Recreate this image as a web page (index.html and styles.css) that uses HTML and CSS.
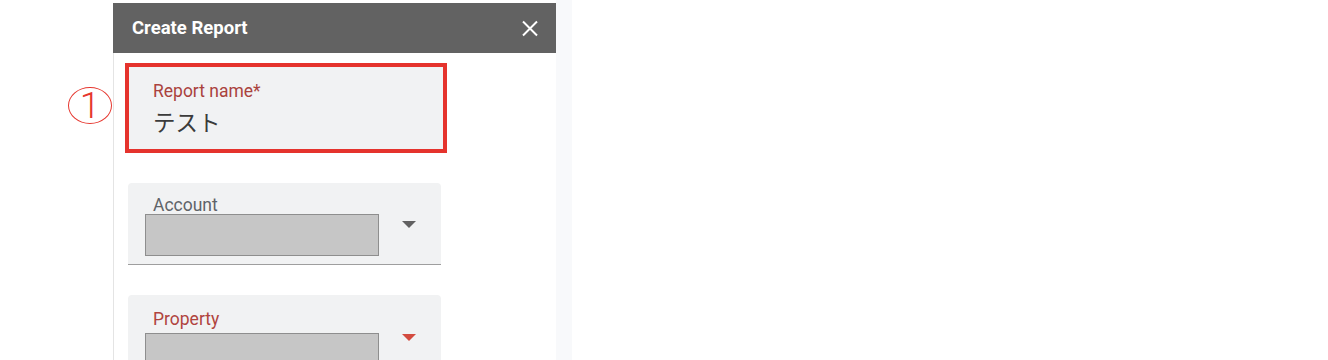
FILE: index.html
```html
<!DOCTYPE html>
<html lang="en">
<head>
    <meta charset="UTF-8">
    <meta name="viewport" content="width=device-width, initial-scale=1.0">
    <title>Create Report</title>
    <link rel="stylesheet" href="styles.css">
</head>
<body>
    <div class="page">
        <div class="gutter">
            <div class="step-mark">1</div>
        </div>
        <div class="panel">
            <div class="panel-header">
                <span class="panel-title">Create Report</span>
                <svg class="close-icon" width="16" height="17" viewBox="0 0 16 17">
                    <path d="M1 1.5 L15 15.5 M15 1.5 L1 15.5" stroke="#ffffff" stroke-width="2" fill="none"/>
                </svg>
            </div>
            <div class="panel-body">
                <div class="name-field">
                    <div class="name-label">Report name*</div>
                    <div class="name-value">テスト</div>
                </div>
                <div class="select-field">
                    <div class="select-main">
                        <div class="select-label">Account</div>
                        <div class="select-box"></div>
                    </div>
                    <div class="select-arrow"></div>
                </div>
                <div class="select-field select-field--active">
                    <div class="select-main">
                        <div class="select-label">Property</div>
                        <div class="select-box"></div>
                    </div>
                    <div class="select-arrow"></div>
                </div>
            </div>
        </div>
        <div class="side-strip"></div>
    </div>
</body>
</html>
```

FILE: styles.css
```css
body {
    margin: 0;
    font-family: Roboto, "Liberation Sans", Arial, sans-serif;
    background-color: #ffffff;
}
.page {
    display: flex;
    height: 360px;
    overflow: hidden;
}
.gutter {
    width: 113px;
    flex: none;
    box-sizing: border-box;
    padding: 87px 0 0 68px;
}
.step-mark {
    width: 44px;
    height: 37px;
    box-sizing: border-box;
    border: 1.8px solid #e6372f;
    border-radius: 50%;
    display: flex;
    justify-content: center;
    align-items: center;
    color: #e6372f;
    font-family: Roboto, sans-serif;
    font-weight: 300;
    font-size: 37px;
    line-height: 1;
}
.panel {
    width: 443px;
    flex: none;
    display: flex;
    flex-direction: column;
    margin-top: 3px;
}
.panel-header {
    flex: none;
    height: 50px;
    background-color: #626262;
    display: flex;
    align-items: center;
    justify-content: space-between;
    padding: 0 18px 0 19px;
}
.panel-title {
    color: #ffffff;
    font-size: 18.5px;
    font-weight: 700;
}
.close-icon {
    display: block;
    margin-top: 1px;
}
.panel-body {
    flex: 1 0 auto;
    border-left: 1px solid #e4e4e4;
    padding: 10px 0 0 11px;
}
.name-field {
    width: 322px;
    height: 90px;
    box-sizing: border-box;
    border: 4px solid #e5332d;
    background-color: #f1f2f3;
    padding: 14px 24px 0 24px;
}
.name-label {
    color: #aa423d;
    font-size: 17.5px;
    line-height: 20px;
}
.name-value {
    margin-top: 8px;
    color: #3b3b3b;
    font-family: "Noto Sans CJK JP", sans-serif;
    font-size: 22.5px;
    line-height: 24px;
}
.select-field {
    width: 313px;
    margin: 30px 0 0 3px;
    box-sizing: border-box;
    background-color: #f1f2f3;
    border-radius: 4px 4px 0 0;
    border-bottom: 1px solid #9e9e9e;
    padding: 12px 24px 8px 17px;
    display: flex;
    align-items: flex-start;
}
.select-label {
    padding-left: 8px;
    color: #5f6368;
    font-size: 17.5px;
    line-height: 20px;
}
.select-box {
    width: 234px;
    height: 42px;
    box-sizing: border-box;
    margin-top: -1px;
    background-color: #c6c6c6;
    border: 1px solid #8e8e8e;
}
.select-arrow {
    width: 0;
    height: 0;
    margin: 26px 0 0 23px;
    border-left: 7.5px solid transparent;
    border-right: 7.5px solid transparent;
    border-top: 7px solid #616161;
}
.select-field--active {
    padding-top: 14px;
}
.select-field--active .select-label {
    color: #b0443e;
    margin-bottom: 5px;
}
.select-field--active .select-arrow {
    margin-top: 25px;
    border-top-color: #d34b3f;
}
.side-strip {
    width: 16px;
    flex: none;
    background-color: #f8f9fb;
}
```
